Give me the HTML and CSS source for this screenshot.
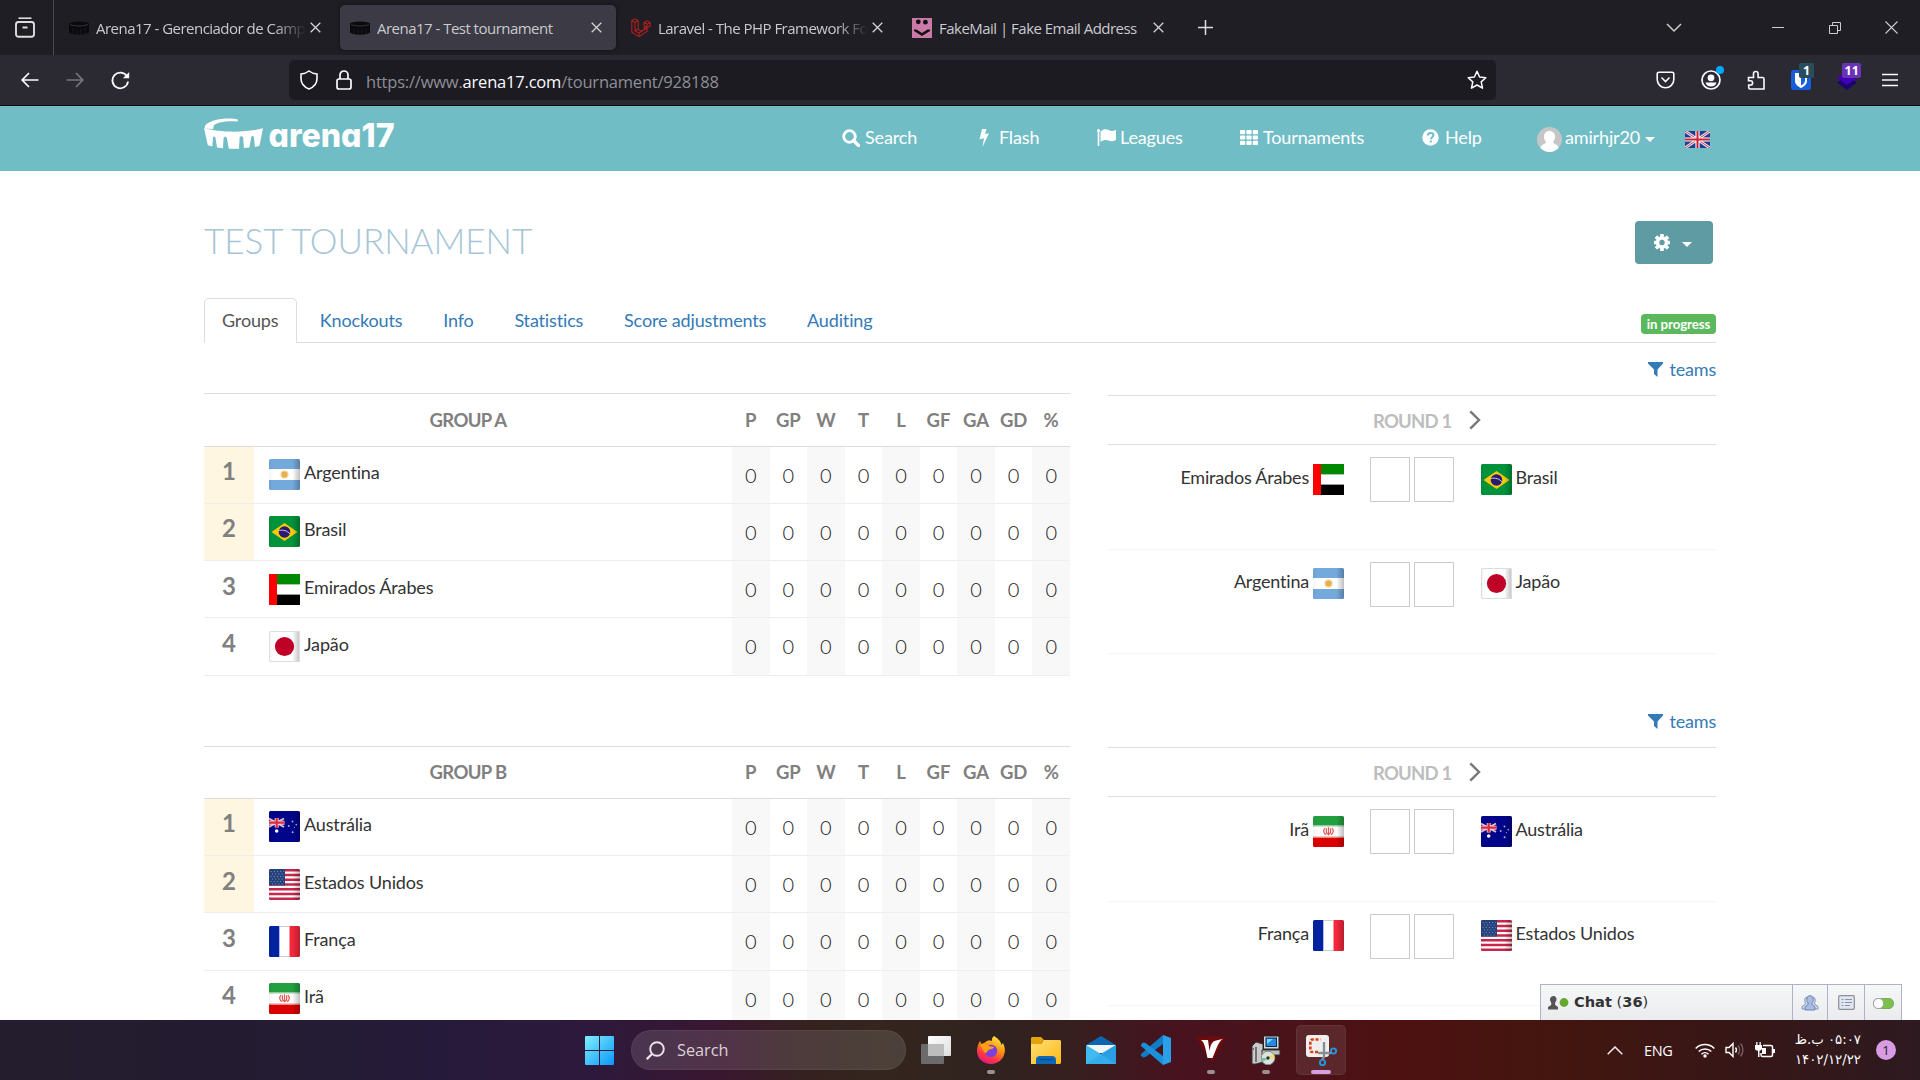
FILE: index.html
```html
<!DOCTYPE html>
<html lang="en">
<head>
<meta charset="utf-8">
<title>Arena17 - Test tournament</title>
<link rel="stylesheet" href="styles.css">
</head>
<body>
<svg class="defs" aria-hidden="true">
  <defs>
    <linearGradient id="gloss" x1="0" x2="1" y1="0" y2="0"><stop offset="0" stop-color="#000" stop-opacity=".04"/><stop offset=".15" stop-color="#000" stop-opacity="0"/><stop offset=".75" stop-color="#000" stop-opacity="0"/><stop offset="1" stop-color="#000" stop-opacity=".25"/></linearGradient>
    <clipPath id="fc"><rect width="31" height="31" rx="1.6"/></clipPath>
  </defs>
  <symbol id="f-ar" viewBox="0 0 31 31"><g clip-path="url(#fc)"><rect width="31" height="31" fill="#74a9dc"/><rect y="10" width="31" height="11" fill="#fff"/><circle cx="15.500" cy="15.500" r="3.200" fill="#e8b04c"/><circle cx="15.500" cy="15.500" r="3.900" fill="none" stroke="#e8b04c" stroke-opacity=".4"/><rect width="31" height="31" fill="url(#gloss)"/></g></symbol>
  <symbol id="f-br" viewBox="0 0 31 31"><g clip-path="url(#fc)"><rect width="31" height="31" fill="#00933b"/><path d="M2.500 16 15.500 7l13 9-13 9z" fill="#fbc90a"/><circle cx="15.500" cy="16" r="5.800" fill="#2b1a72"/><path d="M10.200 14.500c4-1 8 .3 10.800 3.300" stroke="#c9cfe6" stroke-width="1" fill="none"/><rect width="31" height="31" fill="url(#gloss)"/></g></symbol>
  <symbol id="f-ae" viewBox="0 0 31 31"><rect width="31" height="31" fill="#fff"/><rect x="8" width="23" height="10" fill="#008800"/><rect x="8" y="10" width="23" height="1" fill="#a7c9a7"/><rect x="8" y="20" width="23" height="1" fill="#999"/><rect x="8" y="21" width="23" height="10" fill="#000"/><rect width="8" height="31" fill="#fe0000"/></symbol>
  <symbol id="f-jp" viewBox="0 0 31 31"><g clip-path="url(#fc)"><rect width="31" height="31" fill="#fff"/><circle cx="15.500" cy="15.500" r="9.600" fill="#bf0027"/><rect width="31" height="31" fill="url(#gloss)"/></g><rect x=".5" y=".5" width="30" height="30" rx="1.500" fill="none" stroke="#ddd"/></symbol>
  <symbol id="f-au" viewBox="0 0 31 31"><g clip-path="url(#fc)"><rect width="31" height="31" fill="#00058a"/><path d="M0 7.500 15 16M15 7.500 0 16" stroke="#e9b9cc" stroke-width="2"/><path d="M0 11.700h15.500M7.700 7v9.500" stroke="#f3d3de" stroke-width="4"/><path d="M0 11.700h15.500M7.700 7v9.500" stroke="#e02a3c" stroke-width="2.200"/><circle cx="7.700" cy="20" r="1.800" fill="#fff"/><g fill="#a9b3dd"><circle cx="23.500" cy="10.500" r=".9"/><circle cx="19.700" cy="15" r=".9"/><circle cx="27.300" cy="13.600" r=".9"/><circle cx="25.400" cy="16.500" r=".6"/><circle cx="23.600" cy="21.300" r="1"/></g><rect width="31" height="31" fill="url(#gloss)"/></g></symbol>
  <symbol id="f-us" viewBox="0 0 31 31"><g clip-path="url(#fc)"><rect width="31" height="31" fill="#fff"/><path d="M0 1.200h31M0 5.970h31M0 10.740h31M0 15.510h31M0 20.280h31M0 25.050h31M0 29.800h31" stroke="#c8264a" stroke-width="2.400"/><rect width="16" height="16.500" fill="#25427c"/><g stroke="#7e93bb" stroke-width="1" stroke-dasharray="1 2.200"><path d="M1.500 2.500H15M3 5H15M1.500 7.500H15M3 10H15M1.500 12.500H15M3 15H15"/></g><rect width="31" height="31" fill="url(#gloss)"/></g></symbol>
  <symbol id="f-fr" viewBox="0 0 31 31"><g clip-path="url(#fc)"><rect width="31" height="31" fill="#fff"/><rect width="10.300" height="31" fill="#0222a0"/><rect x="20.500" width="10.500" height="31" fill="#f5283c"/><rect width="31" height="31" fill="url(#gloss)"/></g><path d="M10.500 .5h10M10.500 30.500h10" stroke="#ccc"/></symbol>
  <symbol id="f-ir" viewBox="0 0 31 31"><g clip-path="url(#fc)"><rect width="31" height="31" fill="#fff"/><rect width="31" height="9.500" fill="#239f40"/><rect y="21.500" width="31" height="9.500" fill="#da0000"/><path d="M0 10h31" stroke="#8fcb9d"/><path d="M0 21h31" stroke="#eb8c8c"/><path d="M12.300 11.800c-2.300 2.300-2.100 5.200.8 6.800M18.700 11.800c2.300 2.300 2.100 5.200-.8 6.800M13.700 12.500c-.8 2.300-.4 4.500 1.100 5.700M17.300 12.500c.8 2.300.4 4.500-1.100 5.700M15.500 11.300v8" stroke="#e2544f" stroke-width="1.200" fill="none"/><rect width="31" height="31" fill="url(#gloss)"/></g></symbol>
  <symbol id="x" viewBox="0 0 11 11"><path d="M.7.7l9.600 9.600M10.300.7.7 10.300" stroke="currentColor" stroke-width="1.300" fill="none"/></symbol>
  <symbol id="fav" viewBox="0 0 20 14"><path d="M0 2.500C3-.3 17-.3 20 2.500v9c-5 3-15 3-20 0z" fill="#0a0a0d"/><path d="M1 3.500c5 2 13 2 18 0" stroke="#34343c" fill="none"/><path d="M4 7v6M8 8v6M12 8v6M16 7v6" stroke="#1b1b20"/></symbol>
  <symbol id="funnel" viewBox="0 0 15 15"><path d="M0 0h15v1.500L9.500 7.500V15L6 12V7.500L0 1.500z" fill="#337ab7"/></symbol>
  <symbol id="next" viewBox="0 0 12 20"><path d="M1.300 1.300 10 10l-8.700 8.700" fill="none" stroke="#777" stroke-width="2.400"/></symbol>
</svg>

<div class="tabstrip">
  <div class="recent"><svg width="20" height="21" viewBox="0 0 20 21"><path d="M3.500 1.200h13" stroke="#ddd" stroke-width="1.600"/><rect x="1" y="5" width="18" height="14.800" rx="2.500" fill="none" stroke="#ddd" stroke-width="1.900"/><path d="M7.500 10.500h5" stroke="#ddd" stroke-width="2"/></svg></div>
  <div class="tab"><svg class="fav"><use href="#fav"/></svg><span class="label fade">Arena17 - Gerenciador de Camp</span><svg class="x"><use href="#x"/></svg></div>
  <div class="tab active"><svg class="fav"><use href="#fav"/></svg><span class="label">Arena17 - Test tournament</span><svg class="x"><use href="#x"/></svg></div>
  <div class="tab"><svg class="fav" viewBox="0 0 20 20"><path d="M.8 2.500 4 .8l3.200 1.700v9l3 1.700 3-1.700V8l-.1-3.500L16 2.800l3.200 1.700V8L16 9.800v3.400l-8 5.400-7.200-4.400zM.8 2.500 4 4.200l3.200-1.700M4 4.200v8.600l3.200-1.700M13.200 4.500 16 6.200l3.200-1.700M16 6.200v3.600M13.200 8 16 9.800M4 12.800l4 2.400 8-5.400M8 15.200v3.400" fill="none" stroke="#b3201f" stroke-width="1.100"/></svg><span class="label fade">Laravel - The PHP Framework Fo</span><svg class="x"><use href="#x"/></svg></div>
  <div class="tab"><svg class="fav" viewBox="0 0 20 20"><rect width="20" height="20" fill="#cb7aa7"/><circle cx="6.300" cy="3.800" r="2.400" fill="#111"/><circle cx="13.400" cy="4.200" r="2.400" fill="#111"/><path d="M2 11.500l2.500 0 5.500 3.500 5.500-3.500 2.500 0v1.500l-8 5-8-5z" fill="#111"/></svg><span class="label">FakeMail | Fake Email Address</span><svg class="x"><use href="#x"/></svg></div>
  <svg class="plus" width="15" height="15" viewBox="0 0 15 15"><path d="M7.500 0v15M0 7.500h15" stroke="#ddd" stroke-width="1.500"/></svg>
  <div class="winbtns">
    <svg width="16" height="10" viewBox="0 0 16 10"><path d="M1 1l7 7 7-7" fill="none" stroke="#ccc" stroke-width="1.500"/></svg>
    <svg width="12" height="12" viewBox="0 0 12 12"><path d="M0 5.500h12" stroke="#ccc"/></svg>
    <svg width="12" height="12" viewBox="0 0 12 12"><path d="M.5 3.500h8v8h-8zM3.500 3.500v-3h8v8h-3" fill="none" stroke="#ccc"/></svg>
    <svg width="13" height="13" viewBox="0 0 13 13"><path d="M.5.5l12 12M12.500.5l-12 12" stroke="#ccc" stroke-width="1.100"/></svg>
  </div>
</div>

<div class="toolbar">
  <div class="navbtns">
    <svg width="18" height="16" viewBox="0 0 18 16"><path d="M17.500 8H1.500M8 1 1.200 8 8 15" fill="none" stroke="#fbfbfe" stroke-width="1.700"/></svg>
    <svg width="18" height="16" viewBox="0 0 18 16"><path d="M.5 8h16M10 1l6.800 7L10 15" fill="none" stroke="#77767f" stroke-width="1.700"/></svg>
    <svg width="19" height="19" viewBox="0 0 19 19"><path d="M16 5.500A7.800 7.800 0 1 0 17 10.500" fill="none" stroke="#fbfbfe" stroke-width="1.800"/><path d="M18.200 1v6.300h-6.300z" fill="#fbfbfe"/></svg>
  </div>
  <div class="urlbar">
    <svg width="18" height="20" viewBox="0 0 18 20"><path d="M9 1c2.500 2 5 2.700 8 3v4.500c0 5-3.500 8.700-8 10.500-4.500-1.800-8-5.500-8-10.500V4c3-.3 5.500-1 8-3z" fill="none" stroke="#fbfbfe" stroke-width="1.600"/></svg>
    <svg width="16" height="20" viewBox="0 0 16 20"><rect x="1" y="9" width="14" height="10" rx="2" fill="none" stroke="#fbfbfe" stroke-width="1.700"/><path d="M4 9V5a4 4 0 0 1 8 0v4" fill="none" stroke="#fbfbfe" stroke-width="1.700"/></svg>
    <span class="url">https://www.<b>arena17.com</b>/tournament/928188</span>
    <svg class="star" width="20" height="20" viewBox="0 0 20 20"><path d="M10 1.300l2.600 5.700 6.200.7-4.600 4.200 1.300 6.300-5.500-3.200-5.500 3.200 1.300-6.300L1.200 7.700 7.400 7z" fill="none" stroke="#fbfbfe" stroke-width="1.500" stroke-linejoin="round"/></svg>
  </div>
  <div class="exts">
    <svg width="19" height="18" viewBox="0 0 19 18"><path d="M3 1.200h13c1 0 1.800.8 1.800 1.800v5.500a8.300 8.300 0 0 1-16.600 0V3C1.200 2 2 1.200 3 1.200z" fill="none" stroke="#fbfbfe" stroke-width="1.600"/><path d="M5.500 6.500l4 4 4-4" fill="none" stroke="#fbfbfe" stroke-width="1.600"/></svg>
    <span class="ext"><svg width="20" height="20" viewBox="0 0 20 20"><circle cx="10" cy="10" r="9" fill="none" stroke="#fbfbfe" stroke-width="1.700"/><circle cx="10" cy="7.800" r="3.400" fill="#fbfbfe"/><path d="M4.500 12.500h11c-1 3-3 4-5.500 4s-4.500-1-5.500-4z" fill="#fbfbfe"/></svg><i class="dot"></i></span>
    <svg width="18" height="20" viewBox="0 0 18 20"><path d="M1.500 7.500h5V3.800a2.300 2.300 0 0 1 4.600 0v3.700h4.400c.9 0 1.500.6 1.500 1.500V19H3.200c-.9 0-1.500-.6-1.500-1.500V15h1.800a2 2 0 0 0 0-4.200H1.500z" fill="none" stroke="#fbfbfe" stroke-width="1.600"/></svg>
    <span class="ext"><svg width="20" height="20" viewBox="0 0 20 20"><rect width="20" height="20" rx="2.500" fill="#175ddc"/><path d="M4 3h12v7.500c0 4-3 6-6 7.500-3-1.500-6-3.500-6-7.500z" fill="#fff"/><path d="M10 5v10.500c2.500-1.300 4-2.800 4-5V5z" fill="#175ddc"/></svg><em class="cnt teal">1</em></span>
    <span class="ext"><svg width="20" height="20" viewBox="0 0 20 20"><path d="M0 12.500 10 20l10-7.500L10 6z" fill="#1d0272"/><path d="M0 8l10 7 10-7L10 1z" fill="#4100b5"/></svg><em class="cnt violet">11</em></span>
    <svg width="16" height="14" viewBox="0 0 16 14"><path d="M0 1.500h16M0 7h16M0 12.500h16" stroke="#fbfbfe" stroke-width="1.500"/></svg>
  </div>
</div>

<div class="page">
  <header class="site">
    <svg class="logo" width="192" height="34" viewBox="0 0 192 34"><path d="M1 11.500C-1 6 12 1.500 24 1.500c5 0 9 .5 10 1.300.5 1-.5 1.700-2 1.600C20 4 11 6 9.500 9l-.3 3z" fill="#fff"/><path d="M0 11c16 4.800 43 4.800 59 .2l-3.300 16.500-.6 1.200-4.200 1-1-9.500c0-2-2.600-2-2.700 0l-1.800 10-5.500.6-.7-10c-.3-2.200-3.500-2.200-3.600 0L35 31.800H24.800L23 21.500c-.3-2.200-3.300-2.200-3.500 0L19 31.300l-6-.8-1.500-9.500c-.3-2-2.300-2-2.500 0l-.7 8.500-4.500-1.200z" fill="#fff"/><text x="64.500" y="29.500" textLength="126" lengthAdjust="spacingAndGlyphs" class="wordmark">arena17</text></svg>
    <nav class="menu">
      <a><svg width="18" height="18" viewBox="0 0 18 18"><circle cx="7.500" cy="7.500" r="5.800" fill="none" stroke="#fff" stroke-width="2.800"/><path d="M11.500 11.500l5 5" stroke="#fff" stroke-width="3.200" stroke-linecap="round"/></svg><span class="g5">Search</span></a>
      <a><svg width="10" height="18" viewBox="0 0 10 18"><path d="M3 0h4.500L6 5l4-.8L3.500 18 5 9.300l-4.500 1z" fill="#fff"/></svg><span class="g10">Flash</span></a>
      <a><svg width="19" height="17" viewBox="0 0 19 17"><path d="M1.500 1v16" stroke="#fff" stroke-width="1.600"/><circle cx="1.500" cy="1.500" r="1.500" fill="#fff"/><path d="M3.500 2.500C7-.5 9.500 0 12 1.300c2.300 1.200 4.500 1 7-.6v10c-2.500 1.700-5 2-7.500.9-2.500-1.200-5-.8-8 1.200z" fill="#fff"/></svg><span class="g4">Leagues</span></a>
      <a><svg width="18" height="15" viewBox="0 0 18 15"><g fill="#fff"><rect width="5.200" height="4.200" rx=".8"/><rect x="6.400" width="5.200" height="4.200" rx=".8"/><rect x="12.800" width="5.200" height="4.200" rx=".8"/><rect y="5.400" width="5.200" height="4.200" rx=".8"/><rect x="6.400" y="5.400" width="5.200" height="4.200" rx=".8"/><rect x="12.800" y="5.400" width="5.200" height="4.200" rx=".8"/><rect y="10.800" width="5.200" height="4.200" rx=".8"/><rect x="6.400" y="10.800" width="5.200" height="4.200" rx=".8"/><rect x="12.800" y="10.800" width="5.200" height="4.200" rx=".8"/></g></svg><span class="g5">Tournaments</span></a>
      <a><svg width="17" height="17" viewBox="0 0 17 17"><circle cx="8.500" cy="8.500" r="8.200" fill="#fff"/><path d="M5.800 6.500c.2-1.800 1.400-2.500 2.800-2.500 1.600 0 2.800.9 2.800 2.300 0 1.900-2.500 1.900-2.500 4M8.800 11.500v2" fill="none" stroke="#70bdc6" stroke-width="2"/></svg><span class="g6">Help</span></a>
      <a><svg class="avatar" width="25" height="25" viewBox="0 0 25 25"><clipPath id="av"><circle cx="12.500" cy="12.500" r="12.500"/></clipPath><g clip-path="url(#av)"><rect width="25" height="25" fill="#c6c6c6"/><path d="M12.500 4c3.500 0 5.500 2.500 5.500 6 0 2-.8 3.800-2 5 .2 2.200 5 2 5.500 6V25H3.500v-4c.5-4 5.300-3.800 5.500-6-1.200-1.200-2-3-2-5 0-3.500 2-6 5.500-6z" fill="#fff"/></g></svg><span class="g3 u">amirhjr20</span><i class="caret"></i></a>
      <svg class="uk" width="25" height="17" viewBox="0 0 25 17"><rect width="25" height="17" fill="#1c3f94"/><path d="M0 0l25 17M25 0L0 17" stroke="#f1dfe6" stroke-width="3"/><path d="M0 0l25 17M25 0L0 17" stroke="#d9485b" stroke-width="1"/><path d="M12.500 0v17M0 8.500h25" stroke="#fff" stroke-width="4.200"/><path d="M12.500 0v17M0 8.500h25" stroke="#cf1f35" stroke-width="2"/></svg>
    </nav>
  </header>

  <main>
    <div class="titlebar">
      <h1>TEST TOURNAMENT</h1>
      <button class="gear"><svg width="16" height="17" viewBox="0 0 16 17"><g fill="#fff"><circle cx="8" cy="8.500" r="6.200"/><rect x="6.200" y="0" width="3.600" height="17" rx=".6"/><rect x="6.200" y="0" width="3.600" height="17" rx=".6" transform="rotate(45 8 8.500)"/><rect x="6.200" y=".5" width="3.600" height="16" rx=".6" transform="rotate(90 8 8.500)"/><rect x="6.200" y="0" width="3.600" height="17" rx=".6" transform="rotate(135 8 8.500)"/></g><circle cx="8" cy="8.500" r="2.700" fill="#5f9ba2"/></svg><i class="caret"></i></button>
    </div>
    <div class="tabs">
      <a class="on">Groups</a><a>Knockouts</a><a>Info</a><a>Statistics</a><a>Score adjustments</a><a>Auditing</a>
      <span class="status">in progress</span>
    </div>

    <section class="group">
      <table>
        <colgroup><col class="c-rank"><col class="c-name"><col span="9" class="c-stat"></colgroup>
        <thead><tr><th class="gname" colspan="2">GROUP A</th><th>P</th><th>GP</th><th>W</th><th>T</th><th>L</th><th>GF</th><th>GA</th><th>GD</th><th>%</th></tr></thead>
        <tbody>
        <tr class="q"><td>1</td><td><div><svg><use href="#f-ar"/></svg>Argentina</div></td><td>0</td><td>0</td><td>0</td><td>0</td><td>0</td><td>0</td><td>0</td><td>0</td><td>0</td></tr>
        <tr class="q"><td>2</td><td><div><svg><use href="#f-br"/></svg>Brasil</div></td><td>0</td><td>0</td><td>0</td><td>0</td><td>0</td><td>0</td><td>0</td><td>0</td><td>0</td></tr>
        <tr class="low"><td>3</td><td><div><svg><use href="#f-ae"/></svg>Emirados Árabes</div></td><td>0</td><td>0</td><td>0</td><td>0</td><td>0</td><td>0</td><td>0</td><td>0</td><td>0</td></tr>
        <tr class="tall low"><td>4</td><td><div><svg><use href="#f-jp"/></svg>Japão</div></td><td>0</td><td>0</td><td>0</td><td>0</td><td>0</td><td>0</td><td>0</td><td>0</td><td>0</td></tr>
        </tbody>
      </table>
      <div class="rounds">
        <div class="filter"><svg width="15" height="15"><use href="#funnel"/></svg><a>teams</a></div>
        <div class="rhead"><span>ROUND 1</span><svg width="12" height="20"><use href="#next"/></svg></div>
        <div class="match"><div class="home">Emirados Árabes<svg><use href="#f-ae"/></svg></div><i></i><i></i><div class="away"><svg><use href="#f-br"/></svg>Brasil</div></div>
        <div class="match m2"><div class="home">Argentina<svg><use href="#f-ar"/></svg></div><i></i><i></i><div class="away"><svg><use href="#f-jp"/></svg>Japão</div></div>
      </div>
    </section>

    <section class="group b">
      <table>
        <colgroup><col class="c-rank"><col class="c-name"><col span="9" class="c-stat"></colgroup>
        <thead><tr><th class="gname" colspan="2">GROUP B</th><th>P</th><th>GP</th><th>W</th><th>T</th><th>L</th><th>GF</th><th>GA</th><th>GD</th><th>%</th></tr></thead>
        <tbody>
        <tr class="q"><td>1</td><td><div><svg><use href="#f-au"/></svg>Austrália</div></td><td>0</td><td>0</td><td>0</td><td>0</td><td>0</td><td>0</td><td>0</td><td>0</td><td>0</td></tr>
        <tr class="q low"><td>2</td><td><div><svg><use href="#f-us"/></svg>Estados Unidos</div></td><td>0</td><td>0</td><td>0</td><td>0</td><td>0</td><td>0</td><td>0</td><td>0</td><td>0</td></tr>
        <tr class="tall low"><td>3</td><td><div><svg><use href="#f-fr"/></svg>França</div></td><td>0</td><td>0</td><td>0</td><td>0</td><td>0</td><td>0</td><td>0</td><td>0</td><td>0</td></tr>
        <tr><td>4</td><td><div><svg><use href="#f-ir"/></svg>Irã</div></td><td>0</td><td>0</td><td>0</td><td>0</td><td>0</td><td>0</td><td>0</td><td>0</td><td>0</td></tr>
        </tbody>
      </table>
      <div class="rounds">
        <div class="filter"><svg width="15" height="15"><use href="#funnel"/></svg><a>teams</a></div>
        <div class="rhead"><span>ROUND 1</span><svg width="12" height="20"><use href="#next"/></svg></div>
        <div class="match"><div class="home">Irã<svg><use href="#f-ir"/></svg></div><i></i><i></i><div class="away"><svg><use href="#f-au"/></svg>Austrália</div></div>
        <div class="match m2"><div class="home">França<svg><use href="#f-fr"/></svg></div><i></i><i></i><div class="away"><svg><use href="#f-us"/></svg>Estados Unidos</div></div>
      </div>
    </section>
  </main>

  <div class="chat">
    <div class="chat-main"><svg width="21" height="14" viewBox="0 0 21 14"><path d="M5.500 0c2 0 3 1.500 3 3.300 0 1.500-.7 2.500-1.300 3.200v2.500L10 11v2.500H0V11l3.200-2V6.500C2.500 5.800 2 4.800 2 3.300 2 1.500 3.500 0 5.500 0z" fill="#555"/><circle cx="16" cy="6.500" r="4.400" fill="#65a830"/></svg><span><b>Chat</b> (<b>36</b>)</span></div>
    <div class="chat-btn b1"><svg width="18" height="16" viewBox="0 0 18 16"><path d="M5 2.500q1.500-1 3 0M10 2.500q3-1 4 1 .8 2-.3 4v1.800l3.300 2.200V14H1v-2.500l3.300-2.200V7.500Q3.200 5.500 4 3.500 4.300 2.700 5 2.500z" fill="#ccd5e5" stroke="#8898bb"/><path d="M9 .7c2.200 0 3.200 1.600 3.200 3.800 0 1.800-.7 2.700-1.300 3.500v1.500l3 2.500v3h-9.800v-3l3-2.500V8c-.6-.8-1.300-1.700-1.300-3.500C5.800 2.300 6.800.7 9 .7z" fill="#a9bce2" stroke="#6c84b8"/></svg></div>
    <div class="chat-btn b2"><svg width="17" height="15" viewBox="0 0 17 15"><rect x=".7" y=".7" width="15.600" height="13.600" rx="1" fill="#e2e6ee" stroke="#8b8f98" stroke-width="1.200"/><path d="M3.500 4.500h2M7 4.500h7M3.500 7.500h2M7 7.500h7M3.500 10.500h2M7 10.500h5" stroke="#8792ad" stroke-width="1.200"/></svg></div>
    <div class="chat-btn b3"><svg width="21" height="11" viewBox="0 0 21 11"><rect x=".5" y=".5" width="20" height="10" rx="4.500" fill="#7cc04b" stroke="#7ea964"/><rect x=".5" y=".5" width="10" height="10" rx="4.500" fill="#fdfdfd" stroke="#a3a3a3"/></svg></div>
  </div>
</div>

<div class="taskbar">
  <svg class="start" width="29" height="29" viewBox="0 0 29 29"><defs><linearGradient id="w" x2="1" y2="1"><stop stop-color="#80efff"/><stop offset="1" stop-color="#0a97f8"/></linearGradient></defs><path d="M1 0h13v14H0V1q0-1 1-1zM15 0h13q1 0 1 1v13H15zM0 15h14v14H1q-1 0-1-1zM15 15h14v13q0 1-1 1H15z" fill="url(#w)"/></svg>
  <div class="search"><svg width="19" height="19" viewBox="0 0 19 19"><circle cx="11" cy="8" r="6.800" fill="none" stroke="#e9e3e8" stroke-width="1.900"/><path d="M6.200 12.800.8 18.200" stroke="#e9e3e8" stroke-width="2.300"/></svg><span>Search</span></div>
  <div class="apps">
    <div class="app"><svg width="30" height="30" viewBox="0 0 30 30"><defs><linearGradient id="tv" y2="1" x2="1"><stop stop-color="#fff"/><stop offset="1" stop-color="#ddd"/></linearGradient></defs><rect x="7" y="1" width="23" height="20" rx="1" fill="url(#tv)"/><rect x="0" y="9" width="23" height="20" rx="1" fill="#6b6b6b"/><path d="M7 9h16v12H7z" fill="#bdbdbd"/></svg></div>
    <div class="app run"><svg width="30" height="30" viewBox="0 0 30 30"><defs><linearGradient id="ff" x1=".8" y1="0" x2=".3" y2="1"><stop stop-color="#fff44f"/><stop offset=".4" stop-color="#ff980e"/><stop offset=".75" stop-color="#ff3647"/><stop offset="1" stop-color="#e31587"/></linearGradient></defs><path d="M18 1c5 3 7 6 7.500 9l1.500-2c2 4 2.500 8 1 12-2 5.500-7 9-13 9C7 29 1 23.500 1 16c0-4 1-7 3-10l1.500 3L9 7.500c2-2 4-2.500 7-1.500-.5-2 .5-4 2-5z" fill="url(#ff)"/><circle cx="15" cy="16" r="6.200" fill="#7e3fe0"/><path d="M4 10c3-2 7-1.500 9 1l5 1c-1 2.500-4 2-5.500 3s-1.500 3-3.500 3z" fill="#ff9f14"/></svg></div>
    <div class="app"><svg width="30" height="30" viewBox="0 0 30 30"><defs><linearGradient id="fo" x2="1" y2="1"><stop stop-color="#ffdf75"/><stop offset="1" stop-color="#fcb916"/></linearGradient></defs><path d="M1 2h9l4 4h-2l-3 4H0V3z" fill="#e3a40b"/><path d="M1 9h9l3-4h16l1 1v22l-1 1H0V9z" fill="url(#fo)"/><path d="M5 29v-4q0-4 4-4h12q4 0 4 4v4z" fill="#0e68b8"/><path d="M8.500 24.500h13" stroke="#0a4a8c" stroke-width="1.300"/></svg></div>
    <div class="app"><svg width="30" height="30" viewBox="0 0 30 30"><path d="M15 1 30 10H0z" fill="#0d64b0"/><path d="M1 10h28v8H1z" fill="#f2f5f8"/><path d="M0 10l15 9 15-9v19H0z" fill="#41b9ef"/><path d="M0 29 30 10v19z" fill="#33aeea"/><path d="M15 19l15 10V10z" fill="#2a9fe4"/></svg></div>
    <div class="app"><svg width="30" height="30" viewBox="0 0 30 30"><path d="M22 0 30 3v24l-8 3z" fill="#2ba0ea"/><path d="M22 0v9L4.500 22 2 22.500 0 20.500v-1.500z" fill="#0f7cc6"/><path d="M22 30v-9L4.500 8 2 7.500 0 9.500V11z" fill="#1b8fd8"/></svg></div>
    <div class="app run"><svg width="30" height="30" viewBox="0 0 30 30"><path d="M0 3q15-4 30 0L15.500 28z" fill="#6d0a0c"/><path d="M5 5h7l1.500 11c1-6 2.500-9 5-10 2-1 5-1 8.500-2-4.500 2-7 11-10.500 19h-5C9.500 14 9 8 5 5z" fill="#fff"/></svg></div>
    <div class="app run"><svg width="30" height="30" viewBox="0 0 30 30"><path d="M1 11 5 7l7 2v18l-7 2H1z" fill="#c9c9c9" stroke="#333"/><path d="M5 12v15M3 14h-1.500" stroke="#555" stroke-width="1.500"/><rect x="12.500" y="1" width="15.500" height="13" fill="#d7d7d2" stroke="#222"/><rect x="15" y="3" width="10.500" height="8.500" fill="#2589dd" stroke="#002a66"/><path d="M16 4h6l-6 5z" fill="#7fd4fb"/><path d="M11 15h18v5H11z" fill="#bfbfbb" stroke="#333"/><circle cx="17" cy="23" r="6.800" fill="#d8e4dc" stroke="#888"/><path d="M17 23l5-4.500A7 7 0 0 1 23.500 24z" fill="#eadf76"/><path d="M17 23l-5 4a7 7 0 0 1-1.400-4z" fill="#77c2a9"/><circle cx="17" cy="23" r="1.700" fill="#333"/></svg></div>
    <div class="app cur"><svg width="31" height="31" viewBox="0 0 31 31"><rect width="23" height="22" rx="3" fill="#f0efef"/><path d="M12 17H6.500Q4.300 17 4.300 14.800V7q0-2.500 2.200-2.500h8" fill="none" stroke="#d8400f" stroke-width="2.600" stroke-dasharray="3 1.700"/><path d="M18 7v15l-2 3M12 18h12l2-1" fill="none" stroke="#888e94" stroke-width="2.400"/><circle cx="27.500" cy="16" r="2.600" fill="none" stroke="#2695dc" stroke-width="1.900"/><circle cx="16.500" cy="27.500" r="2.600" fill="none" stroke="#2695dc" stroke-width="1.900"/></svg></div>
  </div>
  <div class="tray">
    <svg width="16" height="9" viewBox="0 0 16 9"><path d="M.7 8.300 8 1l7.300 7.300" fill="none" stroke="#f1ecec" stroke-width="1.500"/></svg>
    <span class="lang">ENG</span>
    <svg class="wifi" width="20" height="15" viewBox="0 0 20 15"><g fill="none" stroke="#fff" stroke-width="1.500"><path d="M.7 5.500a13 13 0 0 1 18.600 0"/><path d="M3.700 8.500a9 9 0 0 1 12.600 0"/><path d="M6.500 11.200a5 5 0 0 1 7 0"/></g><circle cx="10" cy="13" r="1.700" fill="#fff"/></svg>
    <svg class="vol" width="20" height="16" viewBox="0 0 20 16"><path d="M1 5.500h3L8 1.500v13L4 10.500H1z" fill="none" stroke="#fff" stroke-width="1.400"/><path d="M10.500 5.500a4 4 0 0 1 0 5" fill="none" stroke="#fff" stroke-width="1.400"/><path d="M13 3.500a7 7 0 0 1 0 9M15.500 1.500a10 10 0 0 1 0 13" fill="none" stroke="#77605e" stroke-width="1.400"/></svg>
    <svg class="bat" width="20" height="17" viewBox="0 0 20 17"><path d="M8 3.500h8q1.500 0 1.500 1.500v8q0 1.500-1.500 1.500H7.500Q6 14.500 6 13v-2" fill="none" stroke="#fff" stroke-width="1.500"/><path d="M18 7h2v4h-2zM7 6h4v6H7zM0 3h7v3.500q0 2-2.500 2.200V15H3V8.700Q0 8.500 0 6.500zM1.200 0h1.300v3H1.200zM4.500 0h1.300v3H4.500z" fill="#fff"/></svg>
    <div class="clock"><span dir="rtl">۰۵:۰۷ ب.ظ</span><span>۱۴۰۲/۱۲/۲۲</span></div>
    <span class="bell">1</span>
  </div>
</div>
</body>
</html>
```
FILE: styles.css
```css
* { box-sizing: border-box; }
body { margin: 0; width: 1920px; height: 1080px; overflow: hidden; display: flex; flex-direction: column; background: #fff; font-family: Lato, "Liberation Sans", sans-serif; color: #333; }
.defs { position: absolute; width: 0; height: 0; }
svg { display: block; flex: none; }
i { font-style: normal; }

/* browser tabs */
.tabstrip { height: 55px; flex: none; background: #1f1e25; display: flex; align-items: center; font: 15px "Open Sans", "Noto Sans", sans-serif; color: #c9c9cd; }
.recent { width: 54px; height: 55px; border-right: 1px solid #4a4950; padding: 17px 0 0 15px; margin-right: 5px; }
.tab { width: 276px; height: 45px; border-radius: 5px; margin-right: 5px; padding: 0 14px 0 10px; display: flex; align-items: center; }
.tab.active { background: #3b3a45; box-shadow: 0 0 4px rgba(0,0,0,.5); }
.fav { width: 20px; height: 20px; margin-right: 7px; }
.label { flex: 1; min-width: 0; white-space: nowrap; overflow: hidden; margin-right: 4px; letter-spacing: -.52px; line-height: 24px; }
.fade { -webkit-mask-image: linear-gradient(to right, #000 85%, transparent 100%); mask-image: linear-gradient(to right, #000 85%, transparent 100%); }
.x { width: 11px; height: 11px; color: #d3d3d6; }
.plus { margin-left: 15px; }
.winbtns { display: flex; align-items: center; margin-left: auto; padding-right: 22px; }
.winbtns svg:nth-child(1) { margin-right: 90px; }
.winbtns svg:nth-child(2) { margin-right: 45px; }
.winbtns svg:nth-child(3) { margin-right: 44px; }

.toolbar { height: 51px; flex: none; background: #2b2a33; border-bottom: 1px solid #0c0c0d; display: flex; align-items: center; }
.navbtns { display: flex; align-items: center; gap: 27px; width: 289px; padding-left: 21px; }
.urlbar { width: 1207px; height: 40px; border-radius: 5px; background: #1c1b22; display: flex; align-items: center; padding: 0 9px 0 11px; }
.urlbar svg:nth-child(1) { margin-right: 18px; }
.urlbar svg:nth-child(2) { margin-right: 13px; }
.url { flex: 1; font: 16.5px "Open Sans", "Noto Sans", sans-serif; letter-spacing: -.2px; color: #8f8e96; padding: 2px 0 0 1px; }
.url b { font-weight: 400; color: #fbfbfe; }
.exts { display: flex; align-items: center; gap: 26px; margin-left: 160px; }
.ext { position: relative; }
.dot { position: absolute; left: 15px; top: -4px; width: 8px; height: 8px; border-radius: 50%; background: #00a8ff; }
.cnt { position: absolute; left: 8px; top: -7px; height: 15px; padding: 0 4px; border-radius: 2px; color: #fff; font: 700 12.500px/15px "Open Sans", sans-serif; }
.teal { background: #2a4d5e; }
.violet { background: #6a32b8; left: 5px; padding: 0 2.500px; }
.exts > :last-child { margin-left: -1px; }

/* page */
.page { height: 914px; flex: none; position: relative; overflow: hidden; }
.site { height: 65px; background: #70bdc6; display: flex; padding-left: 204px; }
.logo { margin-top: 11px; overflow: visible; }
.wordmark { font: 800 33px Inter, sans-serif; font-feature-settings: "cv11"; fill: #fff; }
.menu { margin-left: 446px; height: 63px; display: grid; grid-template-columns: 137px 118px 143px 182px 115px 148px auto; align-items: center; color: #fff; font-size: 18px; }
.menu a { display: flex; align-items: center; white-space: nowrap; }
.menu span { letter-spacing: -.15px; margin-top: -2px; }
.g3 { margin-left: 3px; } .g4 { margin-left: 4px; } .g5 { margin-left: 5px; } .g6 { margin-left: 6px; } .g10 { margin-left: 10px; }
.avatar { margin-top: 3px; }
.caret { width: 0; height: 0; border: 5px solid transparent; border-top-color: #fff; border-bottom: 0; }
.menu .caret { margin: 4px 0 0 5px; }
.uk { margin-top: 4px; }

main { width: 1512px; margin-left: 204px; }
.titlebar { height: 127px; display: flex; justify-content: space-between; padding: 50px 3px 0 0; }
h1 { margin: -2px 0 0; font-weight: 300; font-size: 35px; line-height: 42px; color: #a6c5d6; letter-spacing: 0; }
.gear { width: 78px; height: 43px; border: 0; border-radius: 4px; background: #5f9ba2; padding: 0 21px 0 19px; display: flex; align-items: center; justify-content: space-between; }
.gear .caret { margin-top: 3px; }
.tabs { height: 45px; display: flex; border-bottom: 1px solid #ddd; font-size: 18px; color: #337ab7; letter-spacing: -.15px; }
.tabs a { height: 45px; padding: 0 17px; border: 1px solid transparent; line-height: 42px; margin-right: 4.800px; white-space: nowrap; }
.tabs .on { width: 93px; color: #555; border-color: #ddd; border-bottom-color: #fff; border-radius: 5px 5px 0 0; background: #fff; }
.status { margin: 16px 0 0 auto; width: 75px; height: 20px; border-radius: 4px; background: #5cb85c; color: #fff; font: 700 13.300px/20px Lato, sans-serif; text-align: center; letter-spacing: -.1px; }

.group { display: flex; justify-content: space-between; height: 353px; padding-top: 50px; align-items: flex-start; }
table { width: 866px; table-layout: fixed; border-collapse: separate; border-spacing: 0; }
.c-rank { width: 50px; }
.c-name { width: 478px; }
.c-stat { width: 37.550px; }
th { height: 54px; padding: 0; border-top: 1px solid #ddd; border-bottom: 1px solid #ddd; font-size: 18.500px; line-height: 22px; font-weight: 700; color: #808080; text-align: center; }
.gname { letter-spacing: -.65px; }
.b th { height: 53px; padding-bottom: 1px; }
td { height: 57px; padding: 16px 0 0; vertical-align: top; border-bottom: 1px solid #eee; font-size: 20px; line-height: 24px; font-weight: 300; color: #222; text-align: center; }
.tall td { height: 58px; }
td:nth-child(odd) { background: #f8f8f8; }
td:first-child { font-size: 24px; font-weight: 700; color: #808080; padding-top: 9px; line-height: 30px; }
tr td:first-child { background: none; }
tr.q td:first-child { background: #fef6e1; }
td:nth-child(2) { padding: 12px 0 0 15px; font-size: 18px; font-weight: 400; line-height: 26px; color: #333; }
.low td:first-child { padding-top: 10px; }
.low td:nth-child(2) { padding-top: 13px; }
td div { display: flex; gap: 4px; letter-spacing: -.15px; }
td svg, .match svg { width: 31px; height: 31px; }
.rounds { width: 608px; margin-top: -50px; }
.filter { height: 52px; display: flex; justify-content: flex-end; align-items: center; gap: 7px; font-size: 18px; letter-spacing: -.2px; color: #337ab7; }
.b .filter { height: 51px; padding-bottom: 1px; }
.rhead { height: 50px; border-top: 1px solid #ddd; border-bottom: 1px solid #ddd; display: flex; align-items: center; padding: 0 0 0 265px; font-size: 18.500px; font-weight: 700; color: #bdbdbd; letter-spacing: -.8px; }
.rhead span { width: 96px; padding-top: 2px; white-space: nowrap; }
.match { height: 105px; border-bottom: 1px solid #f6f6f6; display: flex; padding-top: 12px; font-size: 18px; line-height: 26px; letter-spacing: -.2px; }
.match.m2 { height: 104px; }
.match > i { width: 40px; height: 45px; border: 1px solid #ccc; margin-right: 4px; }
.home { width: 236px; margin-right: 26px; display: flex; justify-content: flex-end; gap: 4px; padding-top: 7px; }
.away { display: flex; gap: 3.500px; margin-left: 23px; padding-top: 7px; }
.m2 .home, .m2 .away { padding-top: 6px; }

.chat { position: absolute; left: 1540px; top: 878px; width: 362px; height: 40px; border: 1px solid #aeb2c8; background: linear-gradient(#f6f7f8, #e9ebee 36px); display: flex; }
.chat-main { width: 251px; padding: 9px 0 0 7px; display: flex; gap: 5px; font: 14.600px/16px "DejaVu Sans", sans-serif; color: #333; }
.chat-main svg { margin-top: 2px; }
.chat-btn { border-left: 1px solid #aeb2c8; display: flex; justify-content: center; height: 40px; padding-top: 10px; }
.b1 { width: 35px; } .b2 { width: 37px; } .b3 { width: 37px; padding-top: 13px; }

/* taskbar */
.taskbar { height: 60px; flex: none; display: flex; align-items: center; padding-left: 585px; background: linear-gradient(90deg, #231d2d 0, #231c32 280px, #261a3a 440px, #2d193c 590px, #3a1730 720px, #352120 800px, #34261e 880px, #30221f 1000px, #371e1f 1080px, #48121f 1180px, #4a131a 1290px, #4d1111 1400px, #43160f 1560px, #381616 1720px, #2d1a20 1920px); font-family: "Open Sans", "Noto Sans", sans-serif; color: #fff; }
.search { width: 275px; height: 40px; margin-left: 17px; border-radius: 20px; border: 1px solid rgba(255,255,255,.06); background: rgba(255,255,255,.12); display: flex; align-items: center; gap: 12px; padding-left: 14px; font-size: 16.300px; color: #dbd2d8; }
.apps { display: flex; gap: 5px; margin-left: 5px; }
.app { width: 50px; height: 50px; border-radius: 5px; display: flex; justify-content: center; padding-top: 10px; position: relative; }
.run::after, .cur::after { content: ""; position: absolute; left: 21px; bottom: 1px; width: 8px; height: 4px; border-radius: 2px; background: #9b9090; }
.cur { background: rgba(255,255,255,.09); border: 1px solid rgba(255,255,255,.06); padding-top: 9px; }
.cur::after { left: 14px; bottom: 0; width: 20px; background: #d79ee6; }
.tray { margin-left: auto; display: flex; align-items: center; padding-right: 24px; }
.lang { font-size: 14.500px; margin: 0 22px 0 21px; width: 29px; letter-spacing: -.3px; }
.wifi { margin-right: 10px; } .vol { margin-right: 10px; }
.clock { width: 81px; margin: 0 15px 0 5px; display: flex; flex-direction: column; align-items: flex-end; font: 13.300px/20px "DejaVu Sans", sans-serif; white-space: nowrap; }
.bell { width: 20px; height: 20px; border-radius: 50%; background: #d89ce4; color: #222; font-size: 13px; line-height: 20px; text-align: center; }
```
